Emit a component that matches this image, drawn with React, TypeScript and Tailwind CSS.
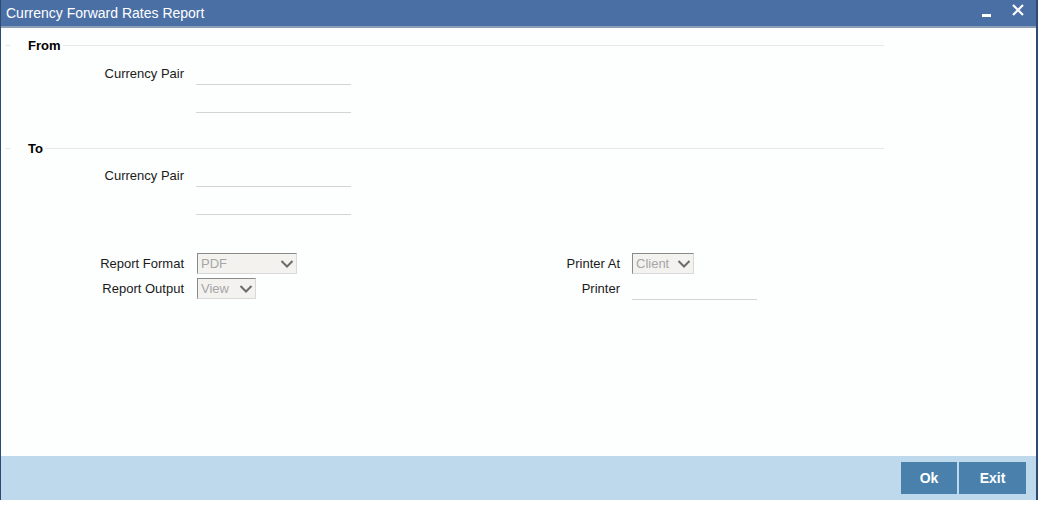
import React from 'react';

const font = { fontFamily: '"Liberation Sans", Arial, sans-serif' };

const Chevron = () => (
  <svg width="14" height="10" viewBox="0 0 14 10" className="shrink-0">
    <path d="M1.5 2 L7 7.5 L12.5 2" fill="none" stroke="#6b6b6b" strokeWidth="2" />
  </svg>
);

const Select = ({ value, width }: { value: string; width: string }) => (
  <div
    className={`flex h-[21px] items-center justify-between border border-t-[#8a8a8a] border-l-[#8a8a8a] border-r-[#d8d8d8] border-b-[#d8d8d8] bg-[#f3f2ef] pl-[3px] pr-[2px] text-[13px] text-[#a6a6a6] ${width}`}
  >
    <span>{value}</span>
    <Chevron />
  </div>
);

const LineInput = ({ width = 'w-[155px]' }: { width?: string }) => (
  <div className={`h-[22px] border-b border-[#d4d4d4] ${width}`} />
);

const Section = ({ title }: { title: string }) => (
  <div className="flex items-center pl-[5px] w-[883px]">
    <div className="h-px w-[4px] bg-[#e6e6e6]" />
    <span className="pl-[18px] pr-[2px] text-[13px] font-bold text-black">{title}</span>
    <div className="h-px flex-1 bg-[#e8e8e8]" />
  </div>
);

const CurrencyBlock = () => (
  <div className="flex pl-[103px] pt-[7px]">
    <span className="w-[80px] whitespace-nowrap text-right text-[13px] pt-[1px]">Currency Pair</span>
    <div className="ml-[12px] flex flex-col gap-[6px]">
      <LineInput />
      <LineInput />
    </div>
  </div>
);

export default function App() {
  return (
    <div className="w-[1038px] h-[508px] bg-white text-[#1a1a1a]" style={font}>
      <div className="flex h-[500px] flex-col border-l border-l-[#2c4a73] border-r-2 border-r-[#2c4a73]">
        <div className="flex h-[28px] shrink-0 items-center justify-between bg-[#4a6fa5] border-b-2 border-b-[#8c9eb4] pl-[5px] pr-[12px]">
          <span className="text-[14px] text-white">Currency Forward Rates Report</span>
          <div className="flex items-center gap-[21px] text-white">
            <div className="mt-[5px] h-[3px] w-[9px] bg-white" />
            <svg width="12" height="12" viewBox="0 0 12 12" className="-mt-[6px]">
              <path d="M1 1 L11 11 M11 1 L1 11" stroke="white" strokeWidth="2.2" />
            </svg>
          </div>
        </div>

        <div className="flex-1 bg-[#fdfefe]">
          <div className="pt-[8px]">
            <Section title="From" />
            <CurrencyBlock />
          </div>
          <div className="pt-[26px]">
            <Section title="To" />
            <CurrencyBlock />
          </div>

          <div className="mt-[38px] flex">
            <div className="flex flex-col gap-[4px]">
              <div className="flex items-center">
                <span className="w-[183px] text-right text-[13px]">Report Format</span>
                <div className="ml-[13px]"><Select value="PDF" width="w-[100px]" /></div>
              </div>
              <div className="flex items-center">
                <span className="w-[183px] text-right text-[13px]">Report Output</span>
                <div className="ml-[13px]"><Select value="View" width="w-[59px]" /></div>
              </div>
            </div>
            <div className="ml-[180px] flex flex-col gap-[4px]">
              <div className="flex items-center">
                <span className="w-[143px] text-right text-[13px]">Printer At</span>
                <div className="ml-[12px]"><Select value="Client" width="w-[62px]" /></div>
              </div>
              <div className="flex items-center">
                <span className="w-[143px] text-right text-[13px]">Printer</span>
                <div className="ml-[12px]"><LineInput width="w-[125px]" /></div>
              </div>
            </div>
          </div>
        </div>

        <div className="flex h-[44px] shrink-0 items-center justify-end gap-[2px] bg-[#bfd9ec] pr-[10px]">
          <button className="h-[32px] w-[56px] bg-[#4a80ac] text-[14px] font-bold text-white">Ok</button>
          <button className="h-[32px] w-[67px] bg-[#4a80ac] text-[14px] font-bold text-white">Exit</button>
        </div>
      </div>
    </div>
  );
}
